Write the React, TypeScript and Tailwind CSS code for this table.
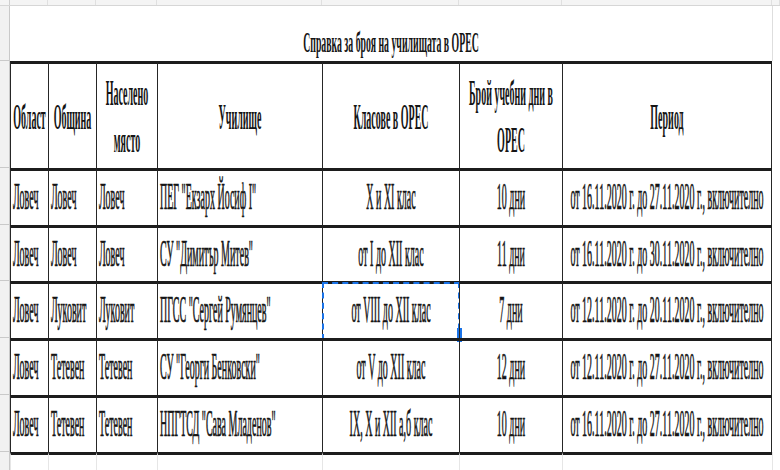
import React from "react";

const grid = "grid grid-cols-[10px_38px_48px_61px_165px_137px_103px_210px_1fr]";

type Row = [string, string, string, string, string, string, string];

const rows: Row[] = [
  ["Ловеч", "Ловеч", "Ловеч", "ПЕГ \"Екзарх Йосиф I\"", "X и XI клас", "10 дни", "от 16.11.2020 г. до 27.11.2020 г., включително"],
  ["Ловеч", "Ловеч", "Ловеч", "СУ \"Димитър Митев\"", "от I до XII клас", "11 дни", "от 16.11.2020 г. до 30.11.2020 г., включително"],
  ["Ловеч", "Луковит", "Луковит", "ПГСС \"Сергей Румянцев\"", "от VIII до XII клас", "7 дни", "от 12.11.2020 г. до 20.11.2020 г., включително"],
  ["Ловеч", "Тетевен", "Тетевен", "СУ \"Георги Бенковски\"", "от V до XII клас", "12 дни", "от 12.11.2020 г. до 27.11.2020 г., включително"],
  ["Ловеч", "Тетевен", "Тетевен", "НПГТСД \"Сава Младенов\"", "IX, X и XII а,б клас", "10 дни", "от 16.11.2020 г. до 27.11.2020 г., включително"],
];

const font = { fontFamily: '"Liberation Serif", "Times New Roman", serif' };

function Txt({ children, left }: { children: React.ReactNode; left?: boolean }) {
  return (
    <span
      className={`inline-block whitespace-nowrap text-[10px] leading-[12px] text-[#151515] scale-y-[3.7] [-webkit-text-stroke:0.2px_#151515] ${left ? "origin-left" : "origin-center"}`}
    >
      {children}
    </span>
  );
}

function Head({ children }: { children: React.ReactNode }) {
  return (
    <span className="inline-block whitespace-nowrap text-center text-[10px] font-bold leading-[13px] text-[#151515] scale-y-[3.6]">
      {children}
    </span>
  );
}

function Strip() {
  return <div className="bg-[#f1f1f1] border-r border-b border-[#c9c9c9]" />;
}

export default function App() {
  return (
    <div className="w-[780px] h-[470px] overflow-hidden bg-white antialiased" style={font}>
      {/* partial row at top */}
      <div className={`${grid} h-[6px] bg-[#f4f4f4] border-b border-[#d6d6d6]`}>
        <div className="border-r border-[#cfcfcf]" />
        {Array.from({ length: 8 }).map((_, i) => (
          <div key={i} className="border-r border-[#e0e0e0]" />
        ))}
      </div>

      {/* title */}
      <div className={`${grid} h-[55px]`}>
        <Strip />
        <div className="col-span-7 flex items-center justify-center pt-[20px]">
          <span className="inline-block whitespace-nowrap text-[9.8px] font-bold text-[#151515] scale-y-[3.1]">
            Справка за броя на училищата в ОРЕС
          </span>
        </div>
        <div className="border-l border-[#dedede]" />
      </div>

      {/* header */}
      <div className={`${grid} h-[107px]`}>
        <Strip />
        {[
          "Област",
          "Община",
          <>Населено<br />място</>,
          "Училище",
          "Класове в ОРЕС",
          <>Брой учебни дни в<br />ОРЕС</>,
          "Период",
        ].map((h, i) => (
          <div
            key={i}
            className={`flex items-center justify-center border-t-[3px] border-t-[#1c1c1c] border-l border-l-[#262626] ${i === 6 ? "border-r border-r-[#262626]" : ""}`}
          >
            <Head>{h}</Head>
          </div>
        ))}
        <div />
      </div>

      {/* data rows */}
      {rows.map((r, ri) => (
        <div key={ri} className={`${grid} ${ri === 1 ? "h-[56px]" : "h-[57px]"}`}>
          <Strip />
          {r.map((c, ci) => {
            const left = ci < 4;
            const selected = ri === 2 && ci === 4;
            return (
              <div
                key={ci}
                className={`relative flex items-center border-t-[3px] border-t-[#1c1c1c] border-l border-l-[#262626] ${ci === 6 ? "border-r border-r-[#262626]" : ""} ${left ? "justify-start pl-[2px]" : "justify-center"}`}
              >
                <Txt left={left}>{c}</Txt>
                {selected && (
                  <>
                    <div className="absolute -left-px -right-px -top-[2px] -bottom-[2px] border-2 border-dashed border-[#1a73e8]" />
                    <div className="absolute -right-[3px] -bottom-[4px] w-[5px] h-[14px] bg-[#1a73e8]" />
                  </>
                )}
              </div>
            );
          })}
          <div />
        </div>
      ))}

      {/* empty sheet below */}
      <div className={`${grid} h-[20px]`}>
        <Strip />
        {Array.from({ length: 7 }).map((_, i) => (
          <div key={i} className="border-t-[3px] border-t-[#1c1c1c] border-l border-l-[#e6e6e6]" />
        ))}
        <div className="border-l border-[#e6e6e6]" />
      </div>
    </div>
  );
}
